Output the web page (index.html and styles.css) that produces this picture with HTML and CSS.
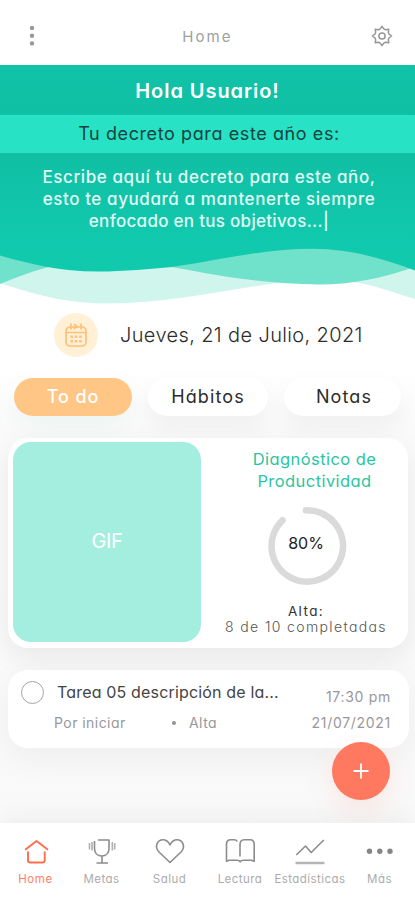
FILE: index.html
```html
<!DOCTYPE html>
<html lang="es">
<head>
<meta charset="utf-8">
<meta name="viewport" content="width=device-width, initial-scale=1">
<title>Home</title>
<link rel="stylesheet" href="styles.css">
</head>
<body>
<div class="app">
  <header class="topbar">
    <svg class="kebab" viewBox="0 0 8 22"><circle cx="4" cy="3" r="2.2"/><circle cx="4" cy="10.7" r="2.2"/><circle cx="4" cy="18.4" r="2.2"/></svg>
    <h1 class="topbar-title">Home</h1>
    <svg class="gear" viewBox="0 0 22 22"><path d="M9.200 3.900 11 1.400l1.800 2.500 1.900.8 3.100-.5-.5 3.100.8 1.900 2.500 1.800-2.500 1.800-.8 1.900.5 3.100-3.100-.5-1.900.8-1.800 2.500-1.800-2.500-1.900-.8-3.100.5.5-3.100-.8-1.900L1.400 11l2.500-1.800.8-1.900-.5-3.100 3.100.5z"/><circle cx="11" cy="11" r="3.100"/></svg>
  </header>

  <section class="hero">
    <h2 class="hero-title">Hola Usuario!</h2>
    <p class="hero-band">Tu decreto para este año es:</p>
    <p class="hero-text">Escribe aquí tu decreto para este año,<br>esto te ayudará a mantenerte siempre<br><span class="hero-last">enfocado en tus objetivos...|</span></p>
  </section>
  <svg class="wave" viewBox="0 0 415 57">
    <path class="wave-pale" d="M0 0V35C30 45 65 55.500 107 55.500C165 55.500 215 44 270 36C305 31 330 30 360 35C380 39 397 46 415 51V0Z"/>
    <path class="wave-mid" d="M0 0V36C15 30 30 24 45 20C85 9 130 8 172 19C225 29 270 36.500 320 36.500C355 36.500 385 29 415 19V0Z"/>
    <path class="wave-solid" d="M0 0V7.500C30 16 60 23.500 98 23.500C125 23.500 150 21 172 19C225 11 265 .7 313 .7C350 .7 385 11 415 22.500V0Z"/>
  </svg>

  <main class="content">
    <div class="date-row">
      <span class="date-badge">
        <svg class="calendar" viewBox="0 0 24 26"><rect x="2" y="5" width="20" height="19" rx="4"/><path d="M2 10.500h20M7 2v5M17 2v5M10.500 2.500 13 4.500l-2.500 2"/><path class="calendar-days" d="M6.500 14.700h2.500M10.800 14.700h2.500M15.200 14.700h2.500M6.500 19.200h2.500M10.800 19.200h2.500M15.200 19.200h2.500"/></svg>
      </span>
      <span class="date-text">Jueves, 21 de Julio, 2021</span>
    </div>

    <nav class="tabs">
      <a class="tab tab-active">To do</a>
      <a class="tab">Hábitos</a>
      <a class="tab tab-notes">Notas</a>
    </nav>

    <section class="card diagnosis">
      <div class="gif">GIF</div>
      <div class="diagnosis-info">
        <h3 class="diagnosis-title">Diagnóstico de<br>Productividad</h3>
        <div class="ring">
          <svg class="ring-track" viewBox="0 0 80 80"><path d="M39 4.300A35.700 35.700 0 1 1 15.500 14.300"/></svg>
          <span class="ring-value">80%</span>
        </div>
        <p class="level">Alta:</p>
        <p class="completed">8 de 10 completadas</p>
      </div>
    </section>

    <section class="card task">
      <span class="check"></span>
      <div class="task-main">
        <p class="task-name">Tarea 05 descripción de la...</p>
        <p class="task-meta"><span class="status">Por iniciar</span><span class="dot"></span><span class="priority">Alta</span></p>
      </div>
      <div class="task-when">
        <p class="task-time">17:30 pm</p>
        <p class="task-date">21/07/2021</p>
      </div>
    </section>
  </main>

  <a class="fab"><svg viewBox="0 0 16 16"><path d="M8 .5v15M.5 8h15"/></svg></a>

  <nav class="bottom">
    <a class="item item-active"><svg class="icon" viewBox="0 0 30 30"><path d="M4.200 13.800 15.500 5l11.500 8.800M7 15.500v8.800q0 2.200 2.200 2.200h12.300q2.200 0 2.200-2.200v-8.800"/></svg><span>Home</span></a>
    <a class="item"><svg class="icon" viewBox="0 0 30 30"><path d="M11 4h11v8.500c0 4.700-3 7.500-7.200 7.500S7.500 17.200 7.500 12.500V5M15 20v7M9.500 27h11.500"/><path class="handles" d="M2.500 7v6.500M5 6v8.500M25.300 6v8.500M27.700 7v6.500"/></svg><span>Metas</span></a>
    <a class="item salud"><svg class="icon" viewBox="0 0 30 30"><path d="M15 26.500 4 16C-1 10.500 2.300 3.800 8 3.800c3 0 5.200 1.700 7 5 1.800-3.300 4-5 7-5 5.700 0 9 6.700 4 12.200z"/></svg><span>Salud</span></a>
    <a class="item"><svg class="icon" viewBox="0 0 30 30"><path d="M12.300 5.500Q11.500 3.800 9 3.800H5Q1.500 4.500 1.500 8v17.300l2.500-1h8q2.500 0 3.200 1.500.7-1.500 3.200-1.500h8l2.800 1V8.500q0-4.700-4-4.700h-6Q15 4 15 8.500v12"/></svg><span>Lectura</span></a>
    <a class="item"><svg class="icon" viewBox="0 0 30 30"><path d="M1.300 19 10.500 10l5.700 6.500L28.800 4"/><path class="base" d="M.5 27h29"/></svg><span>Estadísticas</span></a>
    <a class="item more"><svg class="icon" viewBox="0 0 30 30"><g class="dots"><circle cx="4.500" cy="15.200" r="2.700"/><circle cx="14.800" cy="15.200" r="2.700"/><circle cx="25" cy="15.200" r="2.700"/></g></svg><span>Más</span></a>
  </nav>
</div>
</body>
</html>
```
FILE: styles.css
```css
* { box-sizing: border-box; }
body, h1, h2, h3, p { margin: 0; font-weight: 400; }
body {
  background: #fff;
  font-family: Inter, "Liberation Sans", sans-serif;
  font-feature-settings: "cv11";
  color: #2c2c2c;
}
svg { display: block; fill: none; flex: none; overflow: visible; }
.app {
  position: relative;
  width: 415px;
  height: 900px;
  display: flex;
  flex-direction: column;
  overflow: hidden;
}

.topbar {
  height: 65px;
  padding: 7px 22px 0 28px;
  display: flex;
  align-items: center;
  justify-content: space-between;
}
.topbar-title { font-size: 15px; letter-spacing: 2.1px; color: #a0a0a0; padding-left: 8px; }
.kebab { width: 8px; height: 22px; fill: #999; }
.gear { width: 22px; height: 22px; stroke: #969696; stroke-width: 1.500; stroke-linejoin: round; }

.hero {
  height: 183px;
  background: linear-gradient(#10c2a7, #10bfa4 48%, #11caae);
  color: #fff;
  text-align: center;
}
.hero-title { font-size: 20px; font-weight: 600; line-height: 52px; height: 50px; letter-spacing: .94px; }
.hero-band {
  height: 38px;
  line-height: 38px;
  background: #27e2c5;
  color: #17443e;
  font-size: 18px;
  letter-spacing: .6px;
  padding-left: 3px;
}
.hero-text {
  padding: 13px 0 0 3px;
  font-size: 17px;
  font-weight: 500;
  line-height: 22px;
  letter-spacing: .59px;
  color: #e2faf5;
}
.hero-last { letter-spacing: .29px; }
.wave { width: 415px; height: 57px; }
.wave-pale { fill: #cff5ed; }
.wave-mid { fill: #70e1cb; }
.wave-solid { fill: #11caae; }

.content {
  flex: 1;
  padding: 8px 6px 0 8px;
  background: linear-gradient(#fff 60px, #fafafa 125px, #f9f9f9);
}
.date-row { display: flex; align-items: center; height: 44px; padding-left: 46px; }
.date-badge {
  width: 44px;
  height: 44px;
  border-radius: 50%;
  background: #fff0d6;
  display: grid;
  place-items: center;
}
.calendar { width: 24px; height: 26px; stroke: #ffc078; stroke-width: 1.700; stroke-linecap: round; stroke-linejoin: round; }
.calendar-days { stroke-width: 2.400; stroke-linecap: butt; }
.date-text { margin-left: 22px; font-size: 20px; font-weight: 300; letter-spacing: .37px; white-space: nowrap; }

.tabs { display: flex; gap: 16px; padding-left: 6px; margin-top: 21px; }
.tab {
  width: 120px;
  height: 38px;
  line-height: 38px;
  border-radius: 19px;
  background: #fff;
  box-shadow: 0 12px 25px rgba(0, 0, 0, .05);
  text-align: center;
  font-size: 18px;
  letter-spacing: 1.100px;
}
.tab-active {
  width: 118px;
  background: #ffc685;
  color: #fff;
  font-weight: 500;
  letter-spacing: .87px;
  box-shadow: 0 12px 28px rgba(20, 150, 110, .06);
}
.tab-notes { width: 117px; padding-left: 3px; }

.card { position: relative; background: #fff; border-radius: 20px; box-shadow: 0 10px 28px rgba(0, 0, 0, .07); }
.diagnosis { width: 400px; height: 210px; margin-top: 22px; padding: 4px 5px; display: flex; }
.gif {
  width: 188px;
  height: 200px;
  border-radius: 18px;
  background: #a4eee0;
  color: #fff;
  font-size: 20px;
  letter-spacing: -.3px;
  line-height: 198px;
  text-align: center;
}
.diagnosis-info { flex: 1; text-align: center; padding: 6px 0 0 5px; }
.diagnosis-title { font-size: 16.500px; line-height: 22px; letter-spacing: .43px; color: #2cc59f; padding-left: 20px; }
.ring { display: grid; width: 80px; height: 80px; margin: 14px 0 0 61px; }
.ring > * { grid-area: 1 / 1; }
.ring-track { width: 80px; height: 80px; stroke: #dadada; stroke-width: 6.600; stroke-linecap: round; }
.ring-value { font-size: 16px; font-weight: 400; line-height: 75px; padding-right: 2px; color: #222; }
.level { margin-top: 18px; font-size: 13.500px; font-weight: 400; line-height: 15px; letter-spacing: 1.400px; color: #333; padding-left: 3px; }
.completed { font-size: 14px; font-weight: 300; line-height: 16px; letter-spacing: 1.370px; color: #555; white-space: nowrap; padding-left: 3px; }

.task { width: 401px; height: 78px; margin-top: 22px; display: flex; box-shadow: 0 10px 35px rgba(0, 0, 0, .05); }
.check { width: 23px; height: 23px; margin: 11px 0 0 13px; border: 1.500px solid #a6a6a6; border-radius: 50%; }
.task-main { margin-left: 13px; flex: 1; }
.task-name { font-size: 16px; line-height: 20px; letter-spacing: .17px; margin: 12px 0 0; color: #444; white-space: nowrap; }
.task-meta { display: flex; align-items: center; font-size: 14px; line-height: 20px; letter-spacing: .45px; color: #98989c; margin: 11px 0 0 -3px; }
.status { width: 118px; }
.dot { width: 4px; height: 4px; border-radius: 50%; background: #929297; margin-right: 13px; }
.task-when { text-align: right; font-size: 14px; color: #98989c; margin: 17px 18px 0 0; line-height: 20px; letter-spacing: .7px; }
.task-date { margin-top: 6px; }

.fab {
  position: absolute;
  left: 332px;
  top: 742px;
  width: 58px;
  height: 58px;
  border-radius: 50%;
  background: #ff7960;
  box-shadow: 0 12px 28px rgba(255, 110, 80, .12);
  display: grid;
  place-items: center;
}
.fab svg { width: 16px; height: 16px; stroke: #fff; stroke-width: 1.800; }

.bottom {
  position: relative;
  height: 77px;
  background: #fff;
  box-shadow: 0 -5px 24px rgba(0, 0, 0, .05);
  display: grid;
  grid-template-columns: 71px 61px 75px 66px 74px 68px;
  padding-top: 13px;
}
.item {
  display: flex;
  flex-direction: column;
  align-items: center;
  gap: 5px;
  font-size: 11.500px;
  line-height: 16px;
  letter-spacing: .45px;
  color: #ababab;
  white-space: nowrap;
}
.item-active { color: #ff806a; letter-spacing: .6px; }
.icon { width: 30px; height: 30px; stroke: #8c8c8c; stroke-width: 1.600; stroke-linejoin: round; }
.item-active .icon { stroke: #ff6d4d; stroke-width: 1.900; }
.handles { stroke: #b0b0b0; }
.base { stroke: #b4b4b4; stroke-width: 2.500; }
.dots { fill: #858585; stroke: none; }
.more { margin-left: -3px; }
```
